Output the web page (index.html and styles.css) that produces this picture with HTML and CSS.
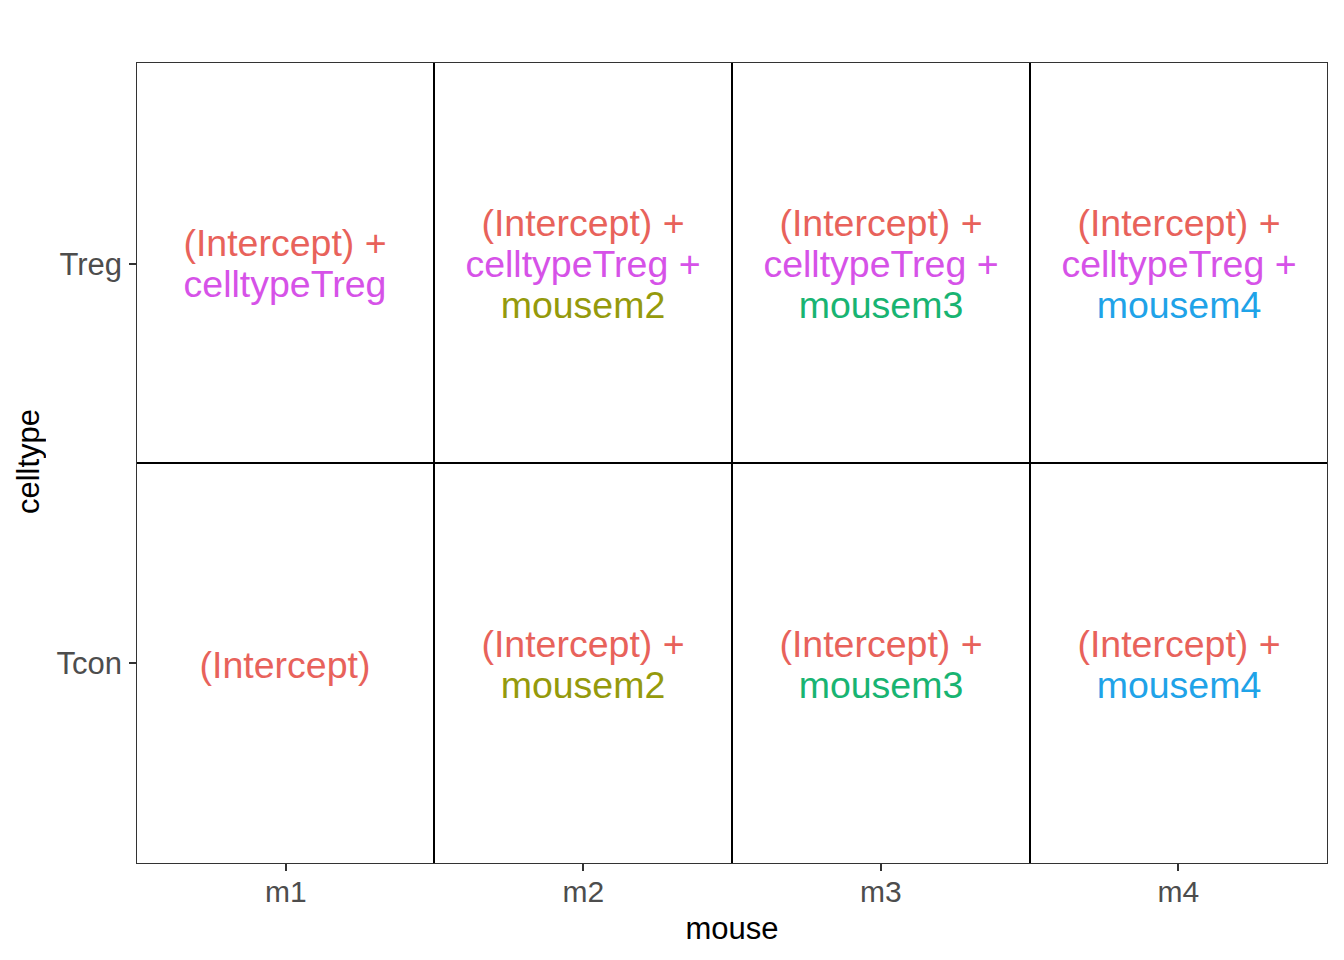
FILE: index.html
```html
<!DOCTYPE html>
<html>
<head>
<meta charset="utf-8">
<link rel="stylesheet" href="styles.css">
</head>
<body>
<div class="plot">
  <div class="left">
    <div class="ytitle"><span>celltype</span></div>
    <div class="yticks">
      <div class="ytick">Treg</div>
      <div class="ytick">Tcon</div>
    </div>
  </div>
  <div class="panel">
    <div class="cell"><div class="lbl"><span class="c-int">(Intercept) +</span><br><span class="c-ct">celltypeTreg</span></div></div>
    <div class="cell"><div class="lbl"><span class="c-int">(Intercept) +</span><br><span class="c-ct">celltypeTreg +</span><br><span class="c-m2">mousem2</span></div></div>
    <div class="cell"><div class="lbl"><span class="c-int">(Intercept) +</span><br><span class="c-ct">celltypeTreg +</span><br><span class="c-m3">mousem3</span></div></div>
    <div class="cell"><div class="lbl"><span class="c-int">(Intercept) +</span><br><span class="c-ct">celltypeTreg +</span><br><span class="c-m4">mousem4</span></div></div>
    <div class="cell"><div class="lbl"><span class="c-int">(Intercept)</span></div></div>
    <div class="cell"><div class="lbl"><span class="c-int">(Intercept) +</span><br><span class="c-m2">mousem2</span></div></div>
    <div class="cell"><div class="lbl"><span class="c-int">(Intercept) +</span><br><span class="c-m3">mousem3</span></div></div>
    <div class="cell"><div class="lbl"><span class="c-int">(Intercept) +</span><br><span class="c-m4">mousem4</span></div></div>
  </div>
  <div class="corner"></div>
  <div class="bottom">
    <div class="xticks">
      <div class="xtick">m1</div>
      <div class="xtick">m2</div>
      <div class="xtick">m3</div>
      <div class="xtick">m4</div>
    </div>
    <div class="xtitle">mouse</div>
  </div>
</div>
</body>
</html>
```

FILE: styles.css
```css
html, body {
  margin: 0;
  padding: 0;
  background: #ffffff;
}

body {
  font-family: "Liberation Sans", Arial, sans-serif;
  width: 1344px;
  height: 960px;
  overflow: hidden;
}

.plot {
  display: grid;
  grid-template-columns: 136px 1192px;
  grid-template-rows: 802px 96px;
  padding-top: 62px;
}

.left {
  display: flex;
  flex-direction: row;
}

.ytitle {
  width: 60px;
  display: flex;
  align-items: center;
  justify-content: center;
}

.ytitle span {
  writing-mode: vertical-rl;
  transform: rotate(180deg);
  font-size: 31px;
  color: #000000;
  line-height: 1;
  padding-top: 2px;
}

.yticks {
  flex: 1;
  display: grid;
  grid-template-rows: 1fr 1fr;
  padding-top: 3px;
}

.ytick {
  display: flex;
  align-items: center;
  justify-content: flex-end;
  font-size: 31px;
  color: #4d4d4d;
}

.ytick::after {
  content: "";
  width: 7px;
  height: 2px;
  background: #333333;
  margin-left: 7px;
  margin-bottom: 2px;
}

.panel {
  display: grid;
  grid-template-columns: repeat(4, 1fr);
  grid-template-rows: repeat(2, 1fr);
  gap: 2px;
  background: #000000;
  border: 1px solid #333333;
}

.cell {
  background: #ffffff;
  display: flex;
  align-items: center;
  justify-content: center;
}

.lbl {
  font-size: 37.5px;
  line-height: 41px;
  text-align: center;
  white-space: nowrap;
  padding-top: 3px;
}

.c-int { color: #e8625b; }
.c-ct  { color: #d652e8; }
.c-m2  { color: #959a0c; }
.c-m3  { color: #18b472; }
.c-m4  { color: #1fa3e8; }

.bottom {
  display: flex;
  flex-direction: column;
}

.xticks {
  display: grid;
  grid-template-columns: repeat(4, 1fr);
  padding: 0 1px;
}

.xtick {
  display: flex;
  flex-direction: column;
  align-items: center;
  font-size: 30px;
  color: #4d4d4d;
  line-height: 34px;
}

.xtick::before {
  content: "";
  width: 2px;
  height: 7px;
  background: #333333;
  margin-bottom: 4px;
}

.xtitle {
  text-align: center;
  font-size: 31px;
  color: #000000;
  line-height: 36px;
  margin-top: 2px;
}
```
